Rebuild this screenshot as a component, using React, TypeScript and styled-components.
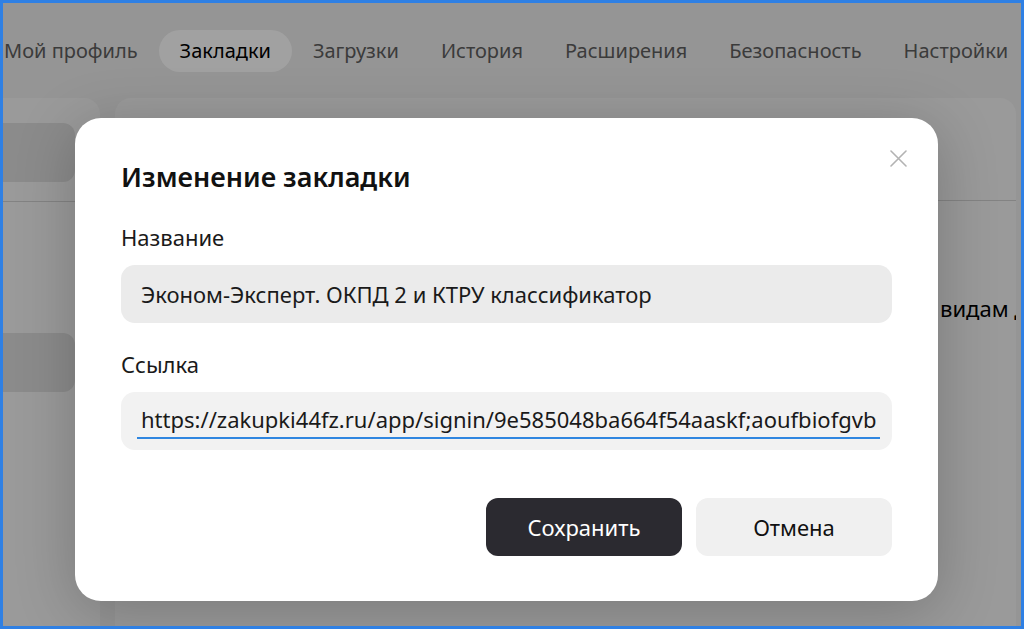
import React from 'react';
import styled, {createGlobalStyle} from 'styled-components';

const GlobalStyle = createGlobalStyle`
    html, body {
        margin: 0;
        padding: 0;
        background: #ececec;
        font-family: "Noto Sans", "Open Sans", sans-serif;
    }
    * {
        box-sizing: border-box;
    }
`;

const Frame = styled.div`
    position: relative;
    width: 1024px;
    height: 629px;
    border: 3px solid #2f80e4;
    overflow: hidden;
    background: #ececec;
`;

const Page = styled.div`
    display: flex;
    flex-direction: column;
    height: 100%;
`;

const Tabs = styled.nav`
    display: flex;
    align-items: center;
    height: 95px;
    margin-left: -20px;
`;

const Tab = styled.div<{ $active?: boolean }>`
    display: flex;
    align-items: center;
    flex-shrink: 0;
    height: 42px;
    padding: 0 21px;
    border-radius: 21px;
    font-size: 20px;
    white-space: nowrap;
    color: ${p => (p.$active ? '#000' : '#5e5e5e')};
    background: ${p => (p.$active ? '#fff' : 'transparent')};
`;

const Body = styled.div`
    display: flex;
    gap: 15px;
    flex: 1;
    margin-left: -20px;
    margin-right: 5px;
`;

const Sidebar = styled.aside`
    flex: 0 0 117px;
    background: #f4f4f4;
    border-radius: 16px 16px 0 0;
    padding-top: 25px;
    display: flex;
    flex-direction: column;
`;

const SideItem = styled.div`
    height: 59px;
    margin-right: 25px;
    border-radius: 12px;
    background: #dcdcdc;
`;

const SideDivider = styled.div`
    height: 1px;
    margin: 19px 0 131px;
    background: #d0d0d0;
`;

const Main = styled.section`
    flex: 1;
    min-width: 0;
    overflow: hidden;
    background: #f4f4f4;
    border-radius: 16px 16px 0 0;
    display: flex;
    flex-direction: column;
`;

const MainHeader = styled.div`
    height: 103px;
    border-bottom: 1px solid #d0d0d0;
`;

const MainRow = styled.div`
    padding: 92px 0 0 825px;
    font-size: 22px;
    color: #000;
    white-space: nowrap;
`;

const Overlay = styled.div`
    position: absolute;
    inset: 0;
    background: rgba(0, 0, 0, 0.37);
    display: flex;
    align-items: flex-start;
    padding: 115px 0 0 72px;
`;

const Dialog = styled.div`
    position: relative;
    width: 863px;
    height: 483px;
    background: #fff;
    border-radius: 26px;
    padding: 39px 46px 0 46px;
    box-shadow: 0 10px 60px rgba(0, 0, 0, 0.22);
`;

const CloseButton = styled.button`
    position: absolute;
    top: 29px;
    right: 29px;
    width: 22px;
    height: 22px;
    padding: 0;
    border: none;
    background: none;
    display: flex;
    align-items: center;
    justify-content: center;
`;

const Title = styled.h2`
    margin: 0 0 26px;
    font-size: 27px;
    font-weight: 600;
    line-height: 40px;
    color: #111;
`;

const Label = styled.div`
    font-size: 22px;
    line-height: 28px;
    color: #1a1a1a;
    margin-bottom: 14px;
`;

const Field = styled.div<{ $tone: string }>`
    height: 58px;
    border-radius: 14px;
    background: ${p => p.$tone};
    display: flex;
    align-items: center;
    padding: 0 20px;
    margin-bottom: 27px;
    font-size: 22px;
    color: #1a1a1a;
    white-space: nowrap;
    overflow: hidden;
`;

const Linked = styled.span`
    margin-left: -4px;
    padding: 0 4px 3px;
    border-bottom: 2px solid #2f86e0;
`;

const Actions = styled.div`
    display: flex;
    justify-content: flex-end;
    gap: 14px;
    margin-top: 48px;
`;

const Button = styled.button<{ $primary?: boolean }>`
    width: 196px;
    height: 58px;
    border: none;
    border-radius: 12px;
    font-family: inherit;
    font-size: 22px;
    color: ${p => (p.$primary ? '#fff' : '#111')};
    background: ${p => (p.$primary ? '#2b2a30' : '#f0f0f0')};
`;

const tabs = ['Мой профиль', 'Закладки', 'Загрузки', 'История', 'Расширения', 'Безопасность', 'Настройки'];

export default function App() {
    return (
        <>
            <GlobalStyle />
            <Frame>
                <Page>
                    <Tabs>
                        {tabs.map(t => (
                            <Tab key={t} $active={t === 'Закладки'}>
                                {t}
                            </Tab>
                        ))}
                    </Tabs>
                    <Body>
                        <Sidebar>
                            <SideItem />
                            <SideDivider />
                            <SideItem />
                        </Sidebar>
                        <Main>
                            <MainHeader />
                            <MainRow>видам деятельности</MainRow>
                        </Main>
                    </Body>
                </Page>
                <Overlay>
                    <Dialog>
                        <CloseButton aria-label="Закрыть">
                            <svg width="17" height="17" viewBox="0 0 17 17">
                                <path d="M1 1L16 16M16 1L1 16" stroke="#b3b3b3" strokeWidth="1.6" strokeLinecap="round" />
                            </svg>
                        </CloseButton>
                        <Title>Изменение закладки</Title>
                        <Label>Название</Label>
                        <Field $tone="#ebebeb">Эконом-Эксперт. ОКПД 2 и КТРУ классификатор</Field>
                        <Label>Ссылка</Label>
                        <Field $tone="#f2f2f2">
                            <Linked>https://zakupki44fz.ru/app/signin/9e585048ba664f54aaskf;aoufbiofgvb</Linked>
                        </Field>
                        <Actions>
                            <Button $primary>Сохранить</Button>
                            <Button>Отмена</Button>
                        </Actions>
                    </Dialog>
                </Overlay>
            </Frame>
        </>
    );
}
